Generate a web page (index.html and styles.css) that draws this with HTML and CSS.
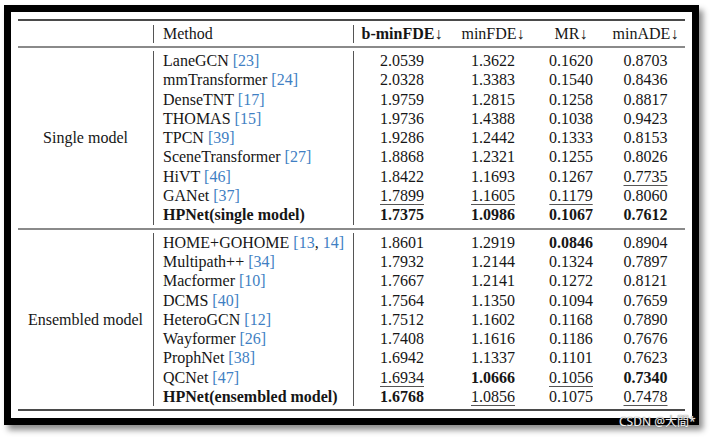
FILE: index.html
```html
<!DOCTYPE html>
<html>
<head>
<meta charset="utf-8">
<link rel="stylesheet" href="styles.css">
</head>
<body>
<div class="frame">
  <div class="rule thick"></div>
  <div class="head">
    <div class="hcell"></div>
    <div class="hcell method vl">Method</div>
    <div class="hcell"><b>b-minFDE</b>↓</div>
    <div class="hcell">minFDE↓</div>
    <div class="hcell">MR↓</div>
    <div class="hcell">minADE↓</div>
  </div>
  <div class="rule mid"></div>
  <div class="section">
    <div class="label">Single model</div>
    <div class="m">LaneGCN <span class="ref">[23]</span></div><div class="v">2.0539</div><div class="v">1.3622</div><div class="v">0.1620</div><div class="v">0.8703</div>
    <div class="m">mmTransformer <span class="ref">[24]</span></div><div class="v">2.0328</div><div class="v">1.3383</div><div class="v">0.1540</div><div class="v">0.8436</div>
    <div class="m">DenseTNT <span class="ref">[17]</span></div><div class="v">1.9759</div><div class="v">1.2815</div><div class="v">0.1258</div><div class="v">0.8817</div>
    <div class="m">THOMAS <span class="ref">[15]</span></div><div class="v">1.9736</div><div class="v">1.4388</div><div class="v">0.1038</div><div class="v">0.9423</div>
    <div class="m">TPCN <span class="ref">[39]</span></div><div class="v">1.9286</div><div class="v">1.2442</div><div class="v">0.1333</div><div class="v">0.8153</div>
    <div class="m">SceneTransformer <span class="ref">[27]</span></div><div class="v">1.8868</div><div class="v">1.2321</div><div class="v">0.1255</div><div class="v">0.8026</div>
    <div class="m">HiVT <span class="ref">[46]</span></div><div class="v">1.8422</div><div class="v">1.1693</div><div class="v">0.1267</div><div class="v"><u>0.7735</u></div>
    <div class="m">GANet <span class="ref">[37]</span></div><div class="v"><u>1.7899</u></div><div class="v"><u>1.1605</u></div><div class="v"><u>0.1179</u></div><div class="v">0.8060</div>
    <div class="m"><b>HPNet(single model)</b></div><div class="v"><b>1.7375</b></div><div class="v"><b>1.0986</b></div><div class="v"><b>0.1067</b></div><div class="v"><b>0.7612</b></div>
  </div>
  <div class="rule mid"></div>
  <div class="section">
    <div class="label">Ensembled model</div>
    <div class="m">HOME+GOHOME <span class="ref">[13</span>, <span class="ref">14]</span></div><div class="v">1.8601</div><div class="v">1.2919</div><div class="v"><b>0.0846</b></div><div class="v">0.8904</div>
    <div class="m">Multipath++ <span class="ref">[34]</span></div><div class="v">1.7932</div><div class="v">1.2144</div><div class="v">0.1324</div><div class="v">0.7897</div>
    <div class="m">Macformer <span class="ref">[10]</span></div><div class="v">1.7667</div><div class="v">1.2141</div><div class="v">0.1272</div><div class="v">0.8121</div>
    <div class="m">DCMS <span class="ref">[40]</span></div><div class="v">1.7564</div><div class="v">1.1350</div><div class="v">0.1094</div><div class="v">0.7659</div>
    <div class="m">HeteroGCN <span class="ref">[12]</span></div><div class="v">1.7512</div><div class="v">1.1602</div><div class="v">0.1168</div><div class="v">0.7890</div>
    <div class="m">Wayformer <span class="ref">[26]</span></div><div class="v">1.7408</div><div class="v">1.1616</div><div class="v">0.1186</div><div class="v">0.7676</div>
    <div class="m">ProphNet <span class="ref">[38]</span></div><div class="v">1.6942</div><div class="v">1.1337</div><div class="v">0.1101</div><div class="v">0.7623</div>
    <div class="m">QCNet <span class="ref">[47]</span></div><div class="v"><u>1.6934</u></div><div class="v"><b>1.0666</b></div><div class="v"><u>0.1056</u></div><div class="v"><b>0.7340</b></div>
    <div class="m"><b>HPNet(ensembled model)</b></div><div class="v"><b>1.6768</b></div><div class="v"><u>1.0856</u></div><div class="v">0.1075</div><div class="v"><u>0.7478</u></div>
  </div>
  <div class="rule thick"></div>
</div>
<div class="watermark">CSDN @大間*</div>
</body>
</html>
```

FILE: styles.css
```css
html, body {
  margin: 0;
  padding: 0;
  background: #ffffff;
}
body {
  position: relative;
  width: 712px;
  height: 438px;
  overflow: hidden;
  font-family: "Liberation Serif", "Times New Roman", serif;
  font-size: 16px;
  color: #161616;
}
.frame {
  box-sizing: border-box;
  width: 695px;
  height: 420px;
  margin: 5px 0 0 4px;
  border: 7px solid #000;
  padding: 7px 7px 0 7px;
  background: #fff;
  box-shadow: 4px 5px 6px rgba(0, 0, 0, 0.45);
}
.rule {
  width: 667px;
}
.rule.thick {
  height: 2px;
  background: #4a4a4a;
}
.rule.mid {
  height: 2px;
  background: #8a8a8a;
}
.head,
.section {
  display: grid;
  grid-template-columns: 135px 201px 96px 86px 70px 79px;
}
.head {
  height: 25px;
  padding: 4px 0 3px 0;
  box-sizing: border-box;
}
.hcell {
  line-height: 18px;
  text-align: center;
  white-space: nowrap;
}
.hcell.method {
  text-align: left;
  padding-left: 9px;
}
.vl {
  border-left: 1px solid #555;
  border-right: 1px solid #555;
}
.section {
  grid-auto-rows: 19.3px;
  padding: 3px 0;
}
.label {
  grid-row: 1 / span 9;
  grid-column: 1;
  display: flex;
  align-items: center;
  justify-content: center;
}
.m {
  grid-column: 2;
  border-left: 1px solid #555;
  border-right: 1px solid #555;
  padding-left: 9px;
  line-height: 19.3px;
  white-space: nowrap;
}
.v {
  text-align: center;
  line-height: 19.3px;
  white-space: nowrap;
}
.ref {
  color: #3f7fc3;
}
u {
  text-decoration: underline;
  text-decoration-color: #555;
  text-underline-offset: 3px;
  text-decoration-thickness: 1px;
}
.watermark {
  position: absolute;
  left: 619px;
  top: 415px;
  font-family: "Noto Sans", "Noto Sans CJK SC", sans-serif;
  font-size: 12px;
  line-height: 14px;
  color: #efefef;
  text-shadow: 0 0 1px #444;
}
```
